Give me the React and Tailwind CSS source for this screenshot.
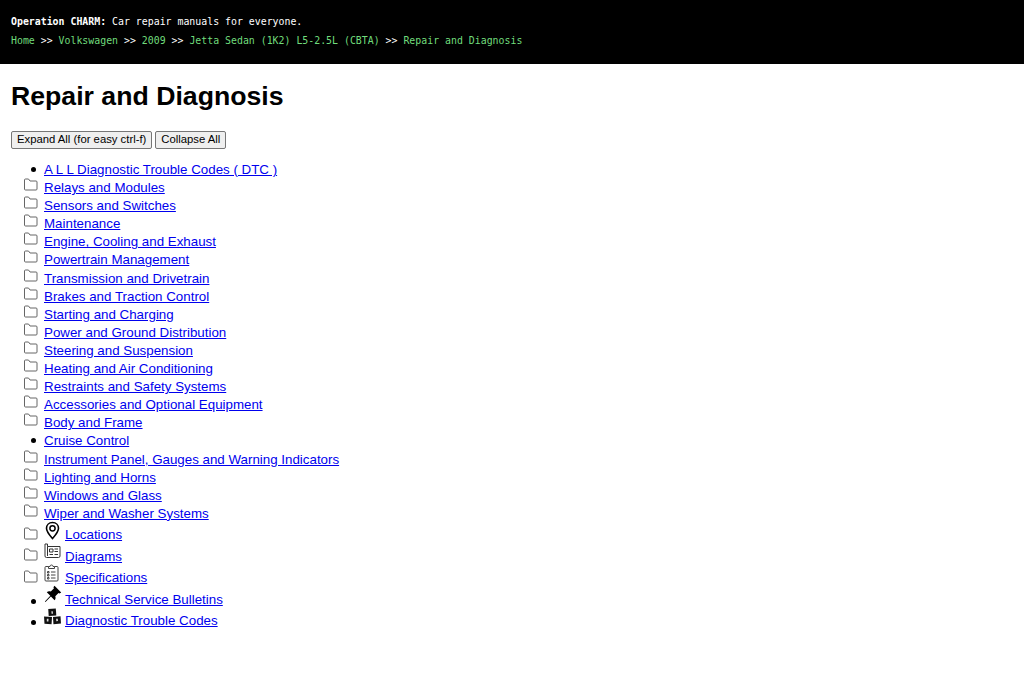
const ITEMS = [
  { label: "A L L Diagnostic Trouble Codes ( DTC )", bullet: true },
  { label: "Relays and Modules" },
  { label: "Sensors and Switches" },
  { label: "Maintenance" },
  { label: "Engine, Cooling and Exhaust" },
  { label: "Powertrain Management" },
  { label: "Transmission and Drivetrain" },
  { label: "Brakes and Traction Control" },
  { label: "Starting and Charging" },
  { label: "Power and Ground Distribution" },
  { label: "Steering and Suspension" },
  { label: "Heating and Air Conditioning" },
  { label: "Restraints and Safety Systems" },
  { label: "Accessories and Optional Equipment" },
  { label: "Body and Frame" },
  { label: "Cruise Control", bullet: true },
  { label: "Instrument Panel, Gauges and Warning Indicators" },
  { label: "Lighting and Horns" },
  { label: "Windows and Glass" },
  { label: "Wiper and Washer Systems" },
];

function FolderIcon() {
  return (
    <svg className="w-[15px] h-[13px]" viewBox="0 0 15 13" fill="none" stroke="#666" strokeWidth="1">
      <path d="M1.5 11V2a1 1 0 0 1 1-1h3l1.5 2h6a1 1 0 0 1 1 1v7a1 1 0 0 1-1 1H2.5a1 1 0 0 1-1-1z" />
    </svg>
  );
}

function PinIcon() {
  return (
    <svg className="w-[17px] h-[19px]" viewBox="0 0 17 19" fill="none" stroke="#000">
      <path strokeWidth="1.6" d="M8.5 1.5c3.6 0 6 2.6 6 5.8 0 3.6-3.5 7.4-6 10.3-2.5-2.9-6-6.7-6-10.3 0-3.2 2.4-5.8 6-5.8z" />
      <circle cx="8.5" cy="7.3" r="2.6" strokeWidth="1.5" />
    </svg>
  );
}

function PaperIcon() {
  return (
    <svg className="w-[17px] h-[17px]" viewBox="0 0 17 17" fill="none" stroke="#333" strokeWidth="1">
      <path d="M1 2v12a1.5 1.5 0 0 0 1.5 1.5h12a1.5 1.5 0 0 0 1.5-1.5V4.5H3.5V14" />
      <path d="M1 2h2.5v2.5" />
      <path d="M5.5 7h3.5v3H5.500zM5.5 12.5h3.5M10.5 7h3.5M10.5 9.5h3.5M10.5 12.5h3.5" />
    </svg>
  );
}

function ClipboardIcon() {
  return (
    <svg className="w-[15px] h-[18px]" viewBox="0 0 15 18" fill="none" stroke="#444" strokeWidth="1">
      <path d="M4.5 2.5H2a1 1 0 0 0-1 1V16a1 1 0 0 0 1 1h11a1 1 0 0 0 1-1V3.5a1 1 0 0 0-1-1h-2.5" />
      <path d="M4.5 4.500V2.500H6a1.500 1.500 0 0 1 3 0h1.500v2z" />
      <path d="M3.5 7.5H5V9H3.500zM3.5 10.5H5V12H3.500zM3.5 13.5H5V15H3.500zM7 8h4.500M7 11h4.500M7 14h4.500" />
    </svg>
  );
}

function PushpinIcon() {
  return (
    <svg className="w-[18px] h-[18px]" viewBox="0 0 18 18" fill="#000">
      <path d="M10.5 0.8 17.2 7.5 15.6 8.6 14.5 8 11.3 11.2c.6 1.8.2 3-.7 4L6.9 11.4 1.5 17 .9 16.4 6.3 10.8 2.8 7.2c1-.9 2.3-1.3 4-.7L10 3.3 9.4 2.3z" />
    </svg>
  );
}

function BlocksIcon() {
  return (
    <svg className="w-[17px] h-[17px] mt-[1px]" viewBox="0 0 18 17">
      <path d="M4.5 0.5 12.5 0 13 7.5 5 8z" fill="#111" />
      <path d="M0 8.500 8.500 9 8 16.800 0.500 16.300z" fill="#111" />
      <path d="M9.500 9 17.500 8.200 18 15.800 10 16.800z" fill="#111" />
      <path d="M7.800 3h1.500l.2 2.500H8z" fill="#ddd" />
      <path d="M3 11h1.800l-.1 2.800H3z" fill="#ddd" />
      <path d="M12.800 11l1.800-.2.200 2.500-1.800.2z" fill="#ddd" />
    </svg>
  );
}

const ICON_ITEMS = [
  { label: "Locations", icon: <PinIcon /> },
  { label: "Diagrams", icon: <PaperIcon /> },
  { label: "Specifications", icon: <ClipboardIcon /> },
  { label: "Technical Service Bulletins", icon: <PushpinIcon />, bullet: true },
  { label: "Diagnostic Trouble Codes", icon: <BlocksIcon />, bullet: true },
];

function Marker({ bullet }) {
  return (
    <span className="w-[20px] shrink-0 flex justify-start">
      {bullet ? (
        <span className="w-[5px] h-[5px] rounded-full bg-black ml-[7px] mt-[6px]" />
      ) : (
        <span className="mt-[-1px] ml-[-1px]"><FolderIcon /></span>
      )}
    </span>
  );
}

export default function App() {
  return (
    <div className="bg-white min-h-[683px] font-['Liberation_Sans',Arial,sans-serif] text-black">
      <header className="bg-black h-[64px] px-[11px] pt-[15px] font-['DejaVu_Sans_Mono',monospace] text-[9.9px] leading-[13px] text-white">
        <p>
          <span className="font-bold">Operation CHARM:</span> Car repair manuals for everyone.
        </p>
        <p className="mt-[6px] text-[#70dc7c]">
          Home <span className="text-white">&gt;&gt;</span> Volkswagen <span className="text-white">&gt;&gt;</span> 2009{" "}
          <span className="text-white">&gt;&gt;</span> Jetta Sedan (1K2) L5-2.5L (CBTA){" "}
          <span className="text-white">&gt;&gt;</span> Repair and Diagnosis
        </p>
      </header>

      <main className="px-[11px]">
        <h1 className="text-[26.67px] leading-[30px] font-bold mt-[17px]">Repair and Diagnosis</h1>

        <div className="flex gap-[3px] mt-[20px]">
          <button className="h-[18px] px-[5px] bg-[#efefef] border border-[#767676] rounded-[2px] text-[11.3px] leading-none">
            Expand All (for easy ctrl-f)
          </button>
          <button className="h-[18px] px-[5px] bg-[#efefef] border border-[#767676] rounded-[2px] text-[11.3px] leading-none">
            Collapse All
          </button>
        </div>

        <ul className="mt-[12px] pl-[13px] text-[13.33px] leading-[18.1px]">
          {ITEMS.map((item) => (
            <li key={item.label} className="flex h-[18.1px]">
              <Marker bullet={item.bullet} />
              <a href="#" className="text-[#0000ee] underline">{item.label}</a>
            </li>
          ))}
          {ICON_ITEMS.map((item) => (
            <li key={item.label} className="flex h-[21.5px] items-end first:mt-[3.5px]">
              <span className="w-[20px] shrink-0 self-center">
                <Marker bullet={item.bullet} />
              </span>
              <span className="w-[21px] shrink-0 self-start -mt-[2px]">{item.icon}</span>
              <a href="#" className="text-[#0000ee] underline">{item.label}</a>
            </li>
          ))}
        </ul>
      </main>
    </div>
  );
}
